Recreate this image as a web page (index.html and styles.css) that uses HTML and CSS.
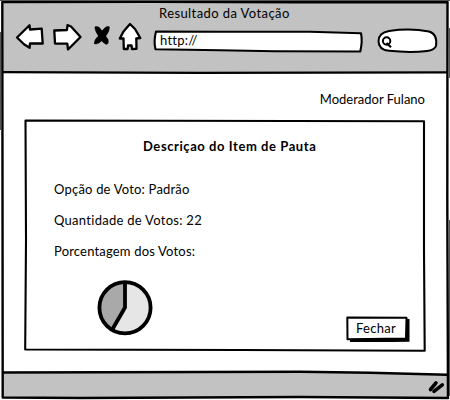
FILE: index.html
```html
<!DOCTYPE html>
<html lang="pt-BR">
<head>
<meta charset="utf-8">
<title>Resultado da Votação</title>
<link rel="stylesheet" href="styles.css">
</head>
<body>
<div class="window">
  <header class="chrome">
    <h1 class="chrome-title">Resultado da Votação</h1>
    <div class="toolbar">
      <svg class="nav-icons" width="148" height="36" viewBox="0 20 148 36">
        <g fill="#fff" stroke="#000" stroke-width="2.3" stroke-linejoin="round" stroke-linecap="round">
          <path d="M17 37.5 L29.5 25.3 L30 29.5 L41.7 28.6 L42.7 43.5 L30 43.3 L29.6 47.8 L24 44.3 Z"/>
          <path d="M54.3 30.5 L67 30 L67.5 25.2 L71 26.5 L80.5 37 L68 49.5 L67.3 43.6 L55 43.5 Z"/>
          <path d="M130 24 L123.500 31.500 L119.800 38.500 L123.500 38.500 L123.800 49 L127.700 49 L128 45.500 L131.500 45.500 L132 49 L136.500 48.800 L136.300 38.500 L140.300 38 L135 29 Z"/>
        </g>
        <g fill="#000" stroke="#000" stroke-width="0.6">
          <path d="M95 26.800 Q98.500 25.500 101.500 30 L108 39.500 Q109 44.500 106 44.300 Q101.500 42 98.500 36 Q94.500 30 95 26.800 Z"/>
          <path d="M109.300 26.800 Q106 25.500 102.500 30.500 L98 36.500 Q94.300 39.500 94.300 43.800 Q97.500 45 101.500 41 L106.500 35 Q109.800 30.500 109.300 26.800 Z"/>
        </g>
      </svg>
      <div class="address">
        <svg class="shape" width="212" height="26" viewBox="152 28 212 26"><path d="M156 31.500 L220 31.700 L310 31.800 L361 33.300 Q362.700 41 360.300 51.500 L275 51.300 L220 50.300 L155.500 49.300 Q153.500 41 156 31.500 Z" fill="#fff" stroke="#000" stroke-width="2.100" stroke-linejoin="round"/></svg>
        <span class="url">http://</span>
      </div>
      <svg class="search" width="64" height="30" viewBox="376 26 64 30">
        <path d="M389 31 Q410 27.800 429 31.500 C436 33.500 437 39 436 46 Q434.500 50 427 51 Q410 53 389 50.800 C381 50 378.500 46 378.500 41 C379 35 382 32.500 389 31 Z" fill="#fff" stroke="#000" stroke-width="2"/>
        <circle cx="386.600" cy="41" r="3.700" fill="#fff" stroke="#000" stroke-width="2"/><path d="M386.500 43 L391 47.300" stroke="#000" stroke-width="2.200"/>
      </svg>
    </div>
  </header>
  <main class="page">
    <p class="user">Moderador Fulano</p>
    <section class="panel">
      <svg class="panel-outline" width="404" height="236" viewBox="24 118 404 236">
        <g fill="none" stroke="#000" stroke-width="2.100" stroke-linejoin="round">
          <path d="M25.500 120.500 Q220 120.600 424 121.200 L424 250 L424.700 350.700 L240 350 L25.200 349.500 L26 240 Z"/>
        </g>
      </svg>
      <h2 class="panel-title">Descriçao do Item de Pauta</h2>
      <p class="row option">Opção de Voto: Padrão</p>
      <p class="row count">Quantidade de Votos: 22</p>
      <p class="row percent">Porcentagem dos Votos:</p>
      <div class="result">
        <svg class="pie" width="56" height="58" viewBox="97 279 56 58">
          <circle cx="125" cy="307.700" r="25.600" fill="#e6e6e6"/>
          <path d="M125 307.700 V282 A25.600 25.600 0 0 0 112.500 330 Z" fill="#a9a9a9"/>
          <g fill="none" stroke="#000" stroke-width="3.800"><circle cx="125" cy="307.700" r="25.600"/><path d="M125 282 V307.500 L112.300 329.500" stroke-linejoin="round"/></g>
        </svg>
        <button class="close" type="button">
          <svg class="shape" width="64" height="26" viewBox="346 316 64 26">
            <path d="M350 319 H409.500 V341.800 L350 342.500 Z" fill="#000"/>
            <path d="M347.300 317.500 L406.500 317.800 L406 338.500 L347.500 339.300 Z" fill="#fff" stroke="#000" stroke-width="2" stroke-linejoin="round"/>
          </svg>
          <span class="close-label">Fechar</span>
        </button>
      </div>
    </section>
  </main>
  <footer class="status">
    <svg width="450" height="30" viewBox="0 370 450 30">
      <path d="M2 372.700 L300 371.800 L370 372.700 L447 374.700 V398 H2 Z" fill="#c2c2c2"/>
      <path d="M2 372.500 L300 371.800 L370 372.700 L447 374.700" fill="none" stroke="#000" stroke-width="2.400"/>
      <path d="M430.500 389.500 L436 382.800 M434 391.300 L442.300 384.800" stroke="#000" stroke-width="3.600" stroke-linecap="round"/>
    </svg>
  </footer>
  <svg class="frame" width="450" height="400" viewBox="0 0 450 400">
    <path d="M2.300 2 L150 1.900 L300 2.200 L447.500 2 L447.300 200 L448 398 L300 397 L80 398 L2.700 397.500 L2.500 180 Z" fill="none" stroke="#000" stroke-width="2.400" stroke-linejoin="round"/>
    <path d="M2 72.200 L200 72.800 L447 72.400" fill="none" stroke="#000" stroke-width="2.300"/>
    <path d="M0 0.500 H450 M0.500 32 V130 M449.500 28 V78 M449.500 220 V396" fill="none" stroke="#555" stroke-width="1"/>
  </svg>
</div>
</body>
</html>
```
FILE: styles.css
```css
* {
  box-sizing: border-box;
}

body,
h1,
h2,
p {
  margin: 0;
}

body {
  color: #000;
  background: #fff;
  font: 13px/18px Lato, "Liberation Sans", sans-serif;
  white-space: nowrap;
}

svg {
  display: block;
  flex: none;
}

.window {
  position: relative;
  display: flex;
  flex-direction: column;
  width: 450px;
  height: 400px;
  overflow: hidden;
}

.chrome {
  height: 73px;
  margin: 0 2px;
  padding-top: 4px;
  background: #c2c2c2;
}

.chrome-title {
  padding-left: 157px;
  font-size: 13px;
  font-weight: 400;
  letter-spacing: 0.41px;
}

.toolbar {
  display: flex;
  margin-left: -2px;
}

.nav-icons {
  margin-top: -2px;
}

.address {
  position: relative;
  width: 212px;
  height: 26px;
  margin: 6px 12px 0 4px;
  padding: 3px 0 0 8px;
}

.shape {
  position: absolute;
  inset: 0;
}

.url {
  position: relative;
  letter-spacing: 0.25px;
}

.search {
  margin-top: 4px;
}

.page {
  flex: 1;
  padding: 17px 25px 0 24px;
}

.user {
  text-align: right;
}

.panel {
  position: relative;
  width: 402px;
  height: 234px;
  margin-top: 10px;
  padding: 19px 18px 0 30px;
}

.panel-outline {
  position: absolute;
  top: 0;
  left: 0;
}

.panel-title {
  padding-left: 89px;
  font-size: 13px;
  font-weight: 700;
  letter-spacing: 0.57px;
}

.row {
  margin-top: 13px;
}

.option {
  margin-top: 25px;
  letter-spacing: 0.2px;
}

.count {
  letter-spacing: 0.28px;
}

.percent {
  letter-spacing: 0.18px;
}

.result {
  display: flex;
  justify-content: space-between;
  margin-top: 19px;
  padding-left: 43px;
}

.close {
  position: relative;
  width: 64px;
  height: 26px;
  margin: 37px -2px 0 0;
  padding: 0 4px 2px 0;
  border: 0;
  background: none;
  color: inherit;
  font: inherit;
}

.close-label {
  position: relative;
  letter-spacing: 0.3px;
}

.status {
  height: 30px;
}

.frame {
  position: absolute;
  inset: 0;
  pointer-events: none;
}
```
